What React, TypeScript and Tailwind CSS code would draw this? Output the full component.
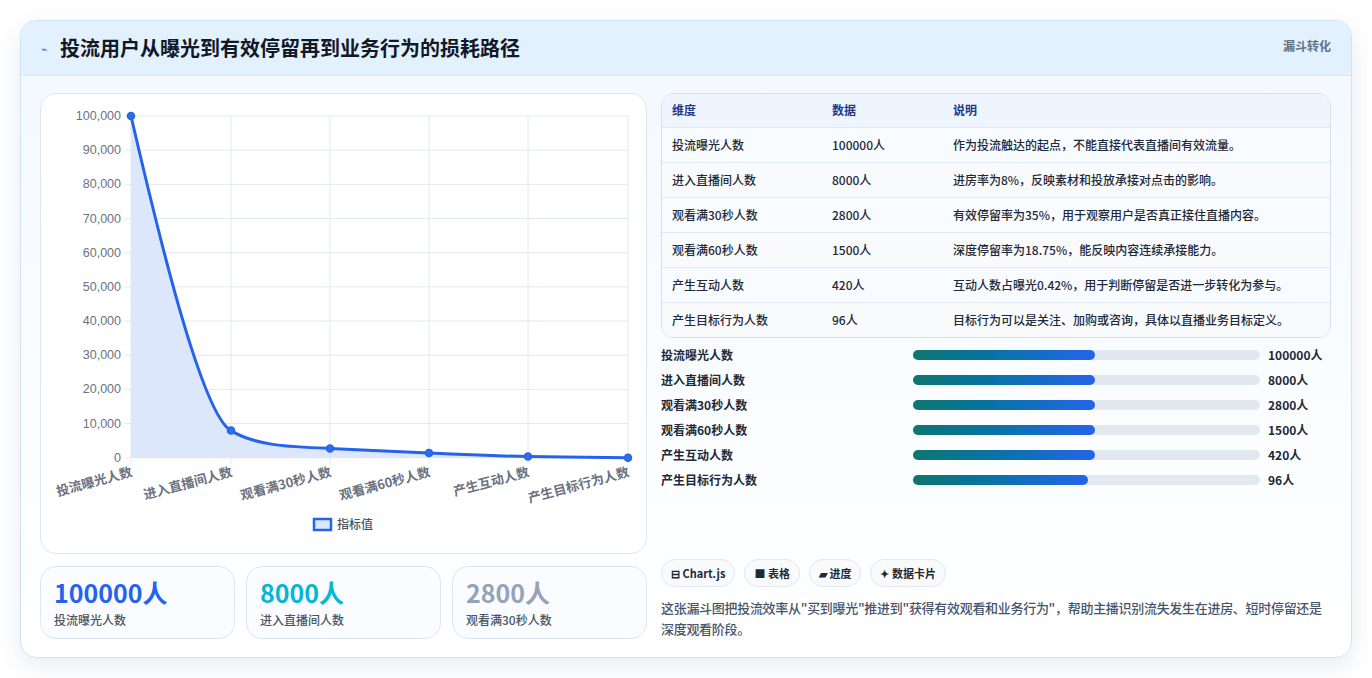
export default function App() {
    const rows = [
        { name: "投流曝光人数", value: "100000人", note: "作为投流触达的起点，不能直接代表直播间有效流量。" },
        { name: "进入直播间人数", value: "8000人", note: "进房率为8%，反映素材和投放承接对点击的影响。" },
        { name: "观看满30秒人数", value: "2800人", note: "有效停留率为35%，用于观察用户是否真正接住直播内容。" },
        { name: "观看满60秒人数", value: "1500人", note: "深度停留率为18.75%，能反映内容连续承接能力。" },
        { name: "产生互动人数", value: "420人", note: "互动人数占曝光0.42%，用于判断停留是否进一步转化为参与。" },
        { name: "产生目标行为人数", value: "96人", note: "目标行为可以是关注、加购或咨询，具体以直播业务目标定义。" },
    ];
    const bars = [52.5, 52.5, 52.5, 52.5, 52.5, 50.5];

    const xs = [90, 190, 289, 388, 487, 587];
    const ys = [22, 336.6, 354.4, 359, 362.6, 363.7];
    const ticks = [100000, 90000, 80000, 70000, 60000, 50000, 40000, 30000, 20000, 10000, 0];
    const curve =
        "M90,22 C115,130 160,320 190,336.6 C215,352 250,353 289,354.4 C320,356 360,357.5 388,359 C420,360.5 460,362 487,362.6 C520,363 560,363.5 587,363.7";

    return (
        <div className="min-h-screen bg-white p-5" style={{ fontFamily: '"Noto Sans CJK SC", "Noto Sans", sans-serif' }}>
            <div className="overflow-hidden rounded-2xl border border-[#cfe3f1] bg-gradient-to-b from-[#f3f9ff] to-white shadow-[0_8px_24px_rgba(15,60,120,0.10)]">
                <div className="flex h-[55px] items-center justify-between border-b border-[#d8e8f6] bg-[#e3f0fd] px-5">
                    <div className="flex items-center gap-3">
                        <span className="text-[11px] text-[#3b6fd8]">⌁</span>
                        <h1 className="text-[20px] font-bold text-[#111827]">投流用户从曝光到有效停留再到业务行为的损耗路径</h1>
                    </div>
                    <span className="self-start pt-4 text-[12px] font-semibold text-[#64748b]">漏斗转化</span>
                </div>

                <div className="flex gap-[14px] pb-[18px] pl-[19px] pr-5 pt-[17px]">
                    <div className="flex w-[607px] flex-col gap-3">
                        <div className="h-[461px] rounded-2xl border border-[#dde7f2] bg-white">
                            <svg width="607" height="461" className="block">
                                {ticks.map((t, i) => {
                                    const y = 22 + i * 34.17;
                                    return (
                                        <g key={t}>
                                            <line x1="84" x2="587" y1={y} y2={y} stroke="#e2e8f0" strokeWidth="1" />
                                            <text x="80" y={y + 4} textAnchor="end" fontSize="12.5" fill="#6b7280" fontFamily="Liberation Sans, Arial, sans-serif">
                                                {t.toLocaleString("en-US")}
                                            </text>
                                        </g>
                                    );
                                })}
                                {xs.map((x) => (
                                    <line key={x} x1={x} x2={x} y1="22" y2="370" stroke="#e2e8f0" strokeWidth="1" />
                                ))}
                                <path d={`${curve} L587,364 L90,364 Z`} fill="#dde7fb" />
                                <path d={curve} fill="none" stroke="#2563eb" strokeWidth="3" />
                                {xs.map((x, i) => (
                                    <circle key={x} cx={x} cy={ys[i]} r="3.5" fill="#2f6fe4" stroke="#2563eb" strokeWidth="1.5" />
                                ))}
                                {rows.map((r, i) => (
                                    <text
                                        key={r.name}
                                        x={xs[i] + 2}
                                        y="382"
                                        textAnchor="end"
                                        fontSize="13"
                                        fontWeight="600"
                                        fill="#6b7280"
                                        transform={`rotate(-15 ${xs[i] + 2} 382)`}
                                    >
                                        {r.name}
                                    </text>
                                ))}
                                <rect x="273" y="425" width="17" height="11" fill="#dde7fb" stroke="#2563eb" strokeWidth="2.5" />
                                <text x="296" y="435" fontSize="12" fontWeight="500" fill="#4b5563">指标值</text>
                            </svg>
                        </div>
                        <div className="grid grid-cols-3 gap-[11px]">
                            {[
                                { v: "100000人", c: "text-[#2563eb]", l: "投流曝光人数" },
                                { v: "8000人", c: "text-[#06b6d4]", l: "进入直播间人数" },
                                { v: "2800人", c: "text-[#94a3b8]", l: "观看满30秒人数" },
                            ].map((s) => (
                                <div key={s.l} className="h-[73px] rounded-2xl border border-[#dbe7f5] bg-[#fafcff] px-[13px] pt-[9px]">
                                    <div className={`text-[25px] font-bold leading-[32px] ${s.c}`}>{s.v}</div>
                                    <div className="mt-[3px] text-[12px] font-medium text-[#4b5563]">{s.l}</div>
                                </div>
                            ))}
                        </div>
                    </div>

                    <div className="flex w-[672px] flex-col">
                        <div className="overflow-hidden rounded-xl border border-[#d6e1ee] bg-white">
                            <table className="w-full text-left text-[12px]">
                                <thead>
                                    <tr className="h-[33px] bg-[#eef5fe] text-[#1e3a8a]">
                                        <th className="w-[170px] pl-[10px] font-semibold">维度</th>
                                        <th className="w-[121px] font-semibold">数据</th>
                                        <th className="font-semibold">说明</th>
                                    </tr>
                                </thead>
                                <tbody>
                                    {rows.map((r, i) => (
                                        <tr key={r.name} className={`h-[35px] border-t border-[#e2e8f0] text-[#1f2937] ${i % 2 ? "bg-[#f8fafc]" : "bg-[#f8fbff]"}`}>
                                            <td className="pl-[10px] font-medium">{r.name}</td>
                                            <td className="font-medium">{r.value}</td>
                                            <td className="font-medium">{r.note}</td>
                                        </tr>
                                    ))}
                                </tbody>
                            </table>
                        </div>

                        <div className="mt-[10px] flex flex-col gap-[11px]">
                            {rows.map((r, i) => (
                                <div key={r.name} className="flex h-[14px] items-center text-[12px] font-semibold text-[#1f2937]">
                                    <span className="w-[252px]">{r.name}</span>
                                    <div className="h-[10px] w-[347px] rounded-full bg-[#e2e8f0]">
                                        <div
                                            className="h-full rounded-full bg-gradient-to-r from-[#0f766e] to-[#2563eb]"
                                            style={{ width: `${bars[i]}%` }}
                                        />
                                    </div>
                                    <span className="ml-2 font-bold">{r.value}</span>
                                </div>
                            ))}
                        </div>

                        <div className="mt-auto">
                            <div className="flex gap-[9px]">
                                {["⊟ Chart.js", "■ 表格", "▰ 进度", "✦ 数据卡片"].map((c) => (
                                    <span key={c} className="flex h-[28px] items-center rounded-full border border-[#e2e8f0] bg-[#f8fafc] px-[9px] text-[11px] font-semibold text-[#1f2937]">
                                        {c}
                                    </span>
                                ))}
                            </div>
                            <p className="mt-[10px] text-[13px] font-medium leading-[21px] tracking-[-0.3px] text-[#475569]">
                                这张漏斗图把投流效率从"买到曝光"推进到"获得有效观看和业务行为"，帮助主播识别流失发生在进房、短时停留还是深度观看阶段。
                            </p>
                        </div>
                    </div>
                </div>
            </div>
        </div>
    );
}
